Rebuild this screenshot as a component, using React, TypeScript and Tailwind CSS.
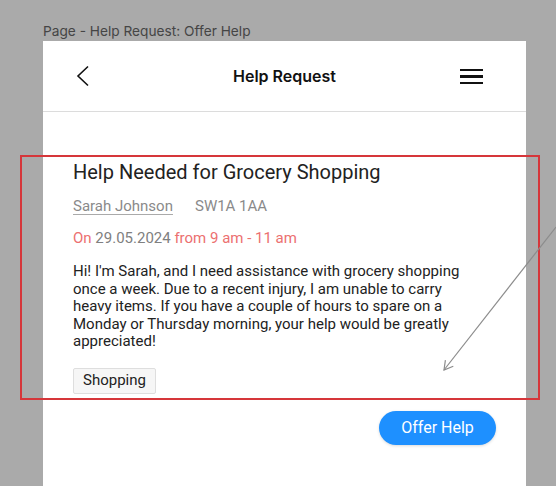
const font = { fontFamily: "Roboto, 'Liberation Sans', sans-serif" };

function Header() {
  return (
    <div className="grid h-[71px] grid-cols-[1fr_auto_1fr] items-center border-b border-[#dcdcdc] pl-[31px] pr-[43px]">
      <svg width="16" height="22" viewBox="0 0 16 22" className="text-[#111]">
        <path d="M14 1.5 L4 11 L14 20.5" fill="none" stroke="currentColor" strokeWidth="1.6" />
      </svg>
      <span className="pl-[12px] text-[16px] font-semibold text-[#111]" style={{ fontFamily: "Inter, sans-serif" }}>
        Help Request
      </span>
      <div className="flex justify-end">
        <div className="flex w-[23px] flex-col gap-[4px] pt-[1px]">
          <span className="h-[2.5px] bg-[#111]" />
          <span className="h-[2.5px] bg-[#111]" />
          <span className="h-[2.5px] bg-[#111]" />
        </div>
      </div>
    </div>
  );
}

export default function App() {
  return (
    <div className="relative h-[486px] w-[556px] overflow-hidden bg-[#aaaaaa]" style={font}>
      <div
        className="pl-[43px] pt-[23px] text-[13.7px] leading-[16px] text-[#454545]"
        style={{ fontFamily: "Inter, sans-serif" }}
      >
        Page - Help Request: Offer Help
      </div>
      <div className="ml-[43px] mt-[2px] h-[445px] w-[483px] bg-white">
        <Header />
        <div className="px-[30px] pt-[48px]">
          <h1 className="text-[20px] leading-[24px] text-[#222]">Help Needed for Grocery Shopping</h1>
          <div className="mt-[12px] flex gap-[22px] text-[15px] leading-[20px] text-[#8a8a8a]">
            <span className="underline decoration-[#aaa] underline-offset-[3px]">Sarah Johnson</span>
            <span>SW1A 1AA</span>
          </div>
          <div className="mt-[12px] text-[15px] leading-[20px] text-[#ec7070]">
            On <span className="text-[#808080]">29.05.2024</span> from 9 am - 11 am
          </div>
          <p className="mt-[15px] w-[395px] text-[15px] leading-[17.5px] text-[#222]">
            Hi! I'm Sarah, and I need assistance with grocery shopping once a week. Due to a recent injury, I am
            unable to carry heavy items. If you have a couple of hours to spare on a Monday or Thursday morning, your
            help would be greatly appreciated!
          </p>
          <div className="mt-[17px] flex">
            <span className="flex h-[26px] items-center rounded-[2px] border border-[#dedede] bg-[#f6f6f6] px-[9px] text-[15px] text-[#222]">
              Shopping
            </span>
          </div>
          <div className="mt-[17px] flex justify-end">
            <button className="h-[34px] w-[117px] rounded-full bg-[#1e90ff] text-[16px] text-white shadow-[0_1px_3px_rgba(0,0,0,0.15)]">
              Offer Help
            </button>
          </div>
        </div>
      </div>

      <div className="pointer-events-none absolute left-[20px] top-[155px] h-[245px] w-[520px] border-2 border-[#d6363a]" />
      <svg className="pointer-events-none absolute left-0 top-0" width="556" height="486">
        <line x1="556" y1="227" x2="444" y2="370" stroke="#8c8c8c" strokeWidth="1.2" />
        <polyline points="453.3,366.3 444,370 445.4,360.1" fill="none" stroke="#8c8c8c" strokeWidth="1.2" />
      </svg>
    </div>
  );
}
